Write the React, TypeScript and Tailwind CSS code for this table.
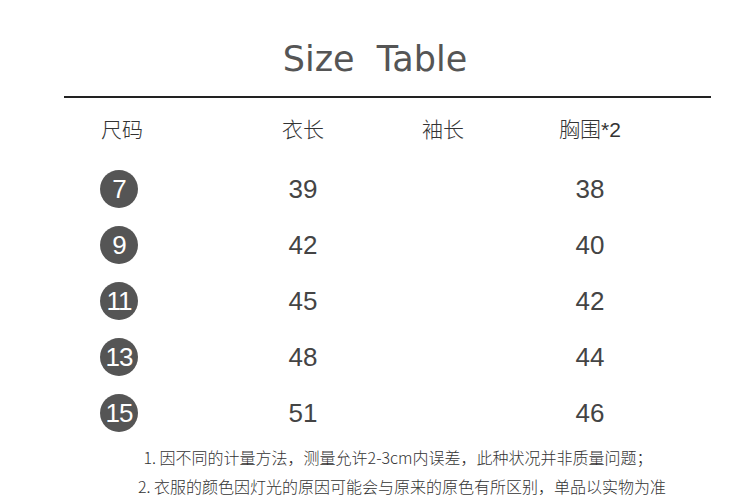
const rows = [
  { size: "7", length: "39", chest: "38" },
  { size: "9", length: "42", chest: "40" },
  { size: "11", length: "45", chest: "42" },
  { size: "13", length: "48", chest: "44" },
  { size: "15", length: "51", chest: "46" },
];

const cjk = { fontFamily: '"Noto Sans CJK SC", sans-serif' };
const num = { fontFamily: '"Liberation Sans", Arial, sans-serif' };

export default function App() {
  return (
    <div className="w-[750px] h-[500px] bg-white overflow-hidden relative">
      <div className="h-[96px] flex items-center justify-center pt-[22px]">
        <h1
          className="text-[35px] leading-none text-[#555] whitespace-pre"
          style={{ fontFamily: '"DejaVu Sans", sans-serif' }}
        >
          Size  Table
        </h1>
      </div>
      <div className="ml-[64px] mr-[39px] h-[2px] bg-[#222]" />

      <div className="pl-[100px]">
        <div
          className="grid grid-cols-[106px_194px_86px_208px] h-[62px] items-center text-[21px] font-light text-[#333]"
          style={cjk}
        >
          <div className="pl-[1px]">尺码</div>
          <div className="text-center">衣长</div>
          <div className="text-center">袖长</div>
          <div className="text-center">
            胸围<span style={num} className="font-normal text-[21px]">*2</span>
          </div>
        </div>
        <div className="h-[1px]" />
        {rows.map((r) => (
          <div
            key={r.size}
            className="grid grid-cols-[106px_194px_86px_208px] h-[56px] items-center text-[26px] text-[#444]"
            style={num}
          >
            <div>
              <div className="w-[38px] h-[38px] rounded-full bg-[#555] text-white flex items-center justify-center text-[26px] tracking-[-1px]">
                {r.size}
              </div>
            </div>
            <div className="text-center">{r.length}</div>
            <div />
            <div className="text-center">{r.chest}</div>
          </div>
        ))}
      </div>

      <div
        className="flex flex-col items-center pl-[46px] pt-[2px] text-[16px] leading-[29px] text-[#333] font-light"
        style={cjk}
      >
        <div>1. 因不同的计量方法，测量允许2-3cm内误差，此种状况并非质量问题；</div>
        <div className="pl-[8px]">2. 衣服的颜色因灯光的原因可能会与原来的原色有所区别，单品以实物为准</div>
      </div>
    </div>
  );
}
